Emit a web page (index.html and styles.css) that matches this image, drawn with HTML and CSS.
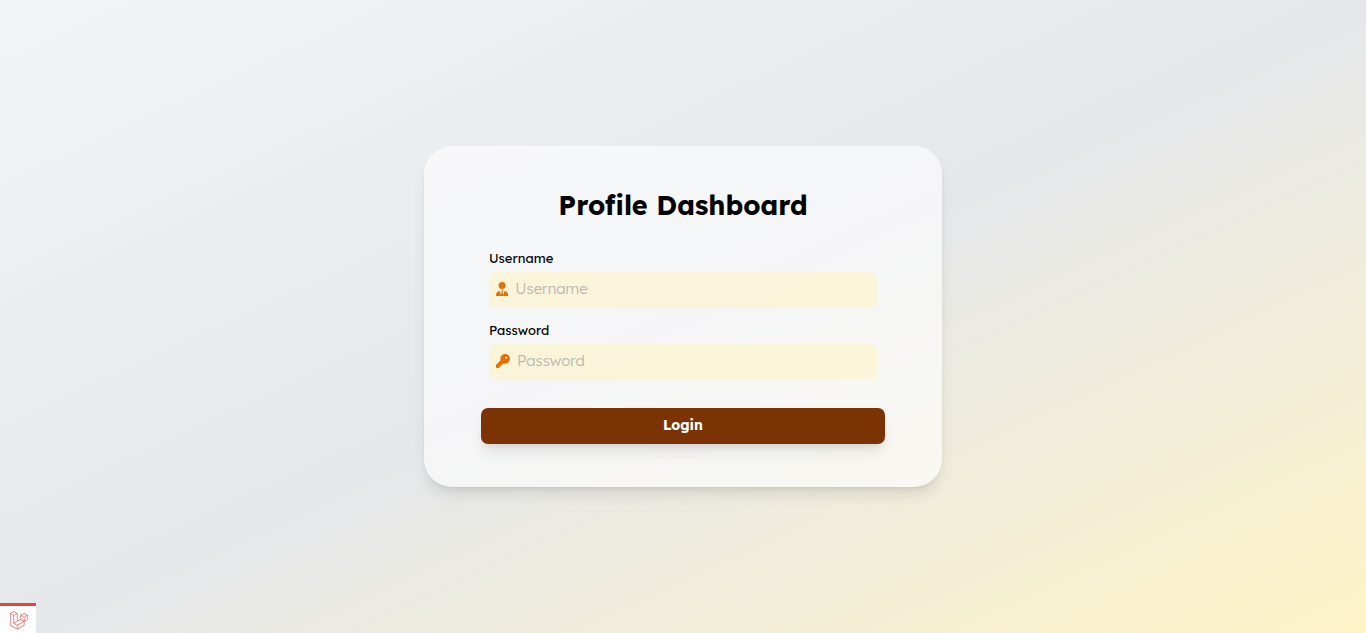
FILE: index.html
```html
<!DOCTYPE html>
<html lang="en">
<head>
<meta charset="utf-8">
<meta name="viewport" content="width=device-width, initial-scale=1">
<title>Profile Dashboard</title>
<link rel="stylesheet" href="styles.css">
</head>
<body>
<main class="page">
  <form class="card">
    <h1 class="card-title">Profile Dashboard</h1>
    <div class="fields">
      <div class="field">
        <label class="field-label" for="username">Username</label>
        <div class="field-box">
          <svg class="field-icon" viewBox="0 0 448 512" aria-hidden="true"><path d="M96 128a128 128 0 1 0 256 0A128 128 0 1 0 96 128zm94.500 200.200l18.600 31L175.800 483.100l-36-146.900c-2-8.100-9.800-13.400-17.900-11.300C51.900 342.400 0 405.800 0 481.300c0 17 13.800 30.700 30.700 30.700H162.500H168 280H417.300c17 0 30.700-13.800 30.700-30.700c0-75.500-51.900-138.900-121.900-156.400c-8.100-2-15.900 3.300-17.900 11.300l-36 146.900L238.900 359.200l18.600-31c6.400-10.700-1.300-24.200-13.700-24.200H224 204.300c-12.400 0-20.100 13.600-13.700 24.200z"/></svg>
          <input class="field-input" id="username" name="username" type="text" placeholder="Username">
        </div>
      </div>
      <div class="field">
        <label class="field-label" for="password">Password</label>
        <div class="field-box">
          <svg class="field-icon" viewBox="0 0 512 512" aria-hidden="true"><path d="M336 352c97.200 0 176-78.800 176-176S433.200 0 336 0S160 78.800 160 176c0 18.700 2.900 36.800 8.300 53.700L7 391c-4.500 4.500-7 10.600-7 17v80c0 13.300 10.700 24 24 24h80c13.300 0 24-10.700 24-24V448h40c13.300 0 24-10.700 24-24V384h40c6.400 0 12.500-2.500 17-7l33.300-33.300c16.900 5.400 35 8.300 53.700 8.300zM376 96a40 40 0 1 1 0 80 40 40 0 1 1 0-80z"/></svg>
          <input class="field-input" id="password" name="password" type="password" placeholder="Password">
        </div>
      </div>
    </div>
    <button class="login" type="submit">Login</button>
  </form>
</main>
<button class="debugbar" type="button" aria-label="Open debug bar">
  <svg class="debugbar-logo" viewBox="0 0 50 52" aria-hidden="true"><path d="M49.626 11.564a.809.809 0 0 1 .028.209v10.972a.8.8 0 0 1-.402.694l-9.209 5.302V39.250c0 .286-.152.550-.400.694L20.420 51.010c-.044.025-.092.041-.140.058-.018.006-.035.017-.054.022a.805.805 0 0 1-.410 0c-.022-.006-.042-.018-.063-.026-.044-.016-.090-.030-.132-.054L.402 39.944A.801.801 0 0 1 0 39.250V6.334c0-.072.010-.142.028-.210.006-.023.020-.044.028-.067.015-.042.029-.085.051-.124.015-.026.037-.047.055-.071.023-.032.044-.065.071-.093.023-.023.053-.040.079-.060.029-.024.055-.050.088-.069h.001l9.610-5.533a.802.802 0 0 1 .800 0l9.610 5.533h.002c.032.020.059.045.088.068.026.020.055.038.078.060.028.029.048.062.072.094.017.024.040.045.054.071.023.040.036.082.052.124.008.023.022.044.028.068a.809.809 0 0 1 .028.209v20.559l8.008-4.611v-10.510c0-.070.010-.141.028-.208.007-.024.020-.045.028-.068.016-.042.030-.085.052-.124.015-.026.037-.047.054-.071.024-.032.044-.065.072-.093.023-.023.052-.040.078-.060.030-.024.056-.050.088-.069h.001l9.611-5.533a.801.801 0 0 1 .800 0l9.610 5.533c.034.020.060.045.090.068.025.020.054.038.077.060.028.029.048.062.072.094.018.024.040.045.054.071.023.039.036.082.052.124.009.023.022.044.028.068zm-1.574 10.718v-9.124l-3.363 1.936-4.646 2.675v9.124l8.010-4.611zm-9.610 16.505v-9.130l-4.570 2.610-13.050 7.448v9.216l17.620-10.144zM1.602 7.719v31.068L19.220 48.930v-9.214l-9.204-5.209-.093-.070-.144-.145-.103-.181-.054-.208-.012-.092v-21.481L4.965 9.654 1.602 7.720zm8.810-5.994L2.405 6.334l8.005 4.609 8.006-4.610-8.006-4.608zm4.164 28.764l4.645-2.674V7.719l-3.363 1.936-4.646 2.675v20.096l3.364-1.937zM39.243 7.164l-8.006 4.609 8.006 4.609 8.005-4.610-8.005-4.608zm-.801 10.605l-4.646-2.675-3.363-1.936v9.124l4.645 2.674 3.364 1.937v-9.124zM20.020 38.330l11.743-6.704 5.870-3.350-8-4.606-9.211 5.303-8.395 4.833 7.993 4.524z"/></svg>
</button>
</body>
</html>
```

FILE: styles.css
```css
* {
  box-sizing: border-box;
}

body {
  margin: 0;
  font-family: Lexend, Inter, "Open Sans", sans-serif;
  color: #000;
}

.page {
  min-height: 100vh;
  display: flex;
  align-items: center;
  justify-content: center;
  background: linear-gradient(to bottom right in oklab, #f3f4f6, #e5e7eb 50%, #fef3c6);
}

.card {
  width: 100%;
  max-width: 518px;
  padding: 42px 57px 43px;
  border-radius: 28px;
  background: rgb(255 255 255 / 60%);
  box-shadow: 0 10px 15px -3px rgb(0 0 0 / 10%), 0 4px 6px -4px rgb(0 0 0 / 10%);
}

.card-title {
  margin: 0 0 26px;
  font-size: 27px;
  line-height: 34px;
  font-weight: 700;
  text-align: center;
}

.fields {
  display: flex;
  flex-direction: column;
  gap: 12px;
  padding: 0 8px;
}

.field {
  display: flex;
  flex-direction: column;
  gap: 4px;
}

.field-label {
  font-size: 13px;
  line-height: 20px;
  font-weight: 400;
}

.field-box {
  display: flex;
  align-items: center;
  gap: 7px;
  height: 36px;
  padding: 0 7px 2px;
  border-radius: 7px;
  background: rgb(254 243 198 / 60%);
}

.field-icon {
  flex: none;
  height: 14px;
  fill: #e17100;
}

.field-input {
  flex: 1;
  min-width: 0;
  padding: 0;
  border: 0;
  outline: 0;
  background: transparent;
  font-family: inherit;
  font-size: 15px;
  line-height: 20px;
  font-weight: 300;
}

.field-input::placeholder {
  color: #b9b8b0;
  opacity: 1;
}

.login {
  display: block;
  width: 100%;
  height: 36px;
  margin-top: 28px;
  padding: 0 0 2px;
  border: 0;
  border-radius: 7px;
  background: #7b3306;
  color: #fff;
  font-family: inherit;
  font-size: 14px;
  line-height: 20px;
  font-weight: 700;
  box-shadow: 0 10px 15px -3px rgb(0 0 0 / 10%), 0 4px 6px -4px rgb(0 0 0 / 10%);
}

.debugbar {
  position: fixed;
  left: 0;
  bottom: 0;
  display: flex;
  padding: 5px 8px 3px 10px;
  border: 0;
  border-top: 3px solid #eb4432;
  background: #fff;
}

.debugbar-logo {
  width: 18px;
  height: 19px;
  fill: #f4433c;
}
```
